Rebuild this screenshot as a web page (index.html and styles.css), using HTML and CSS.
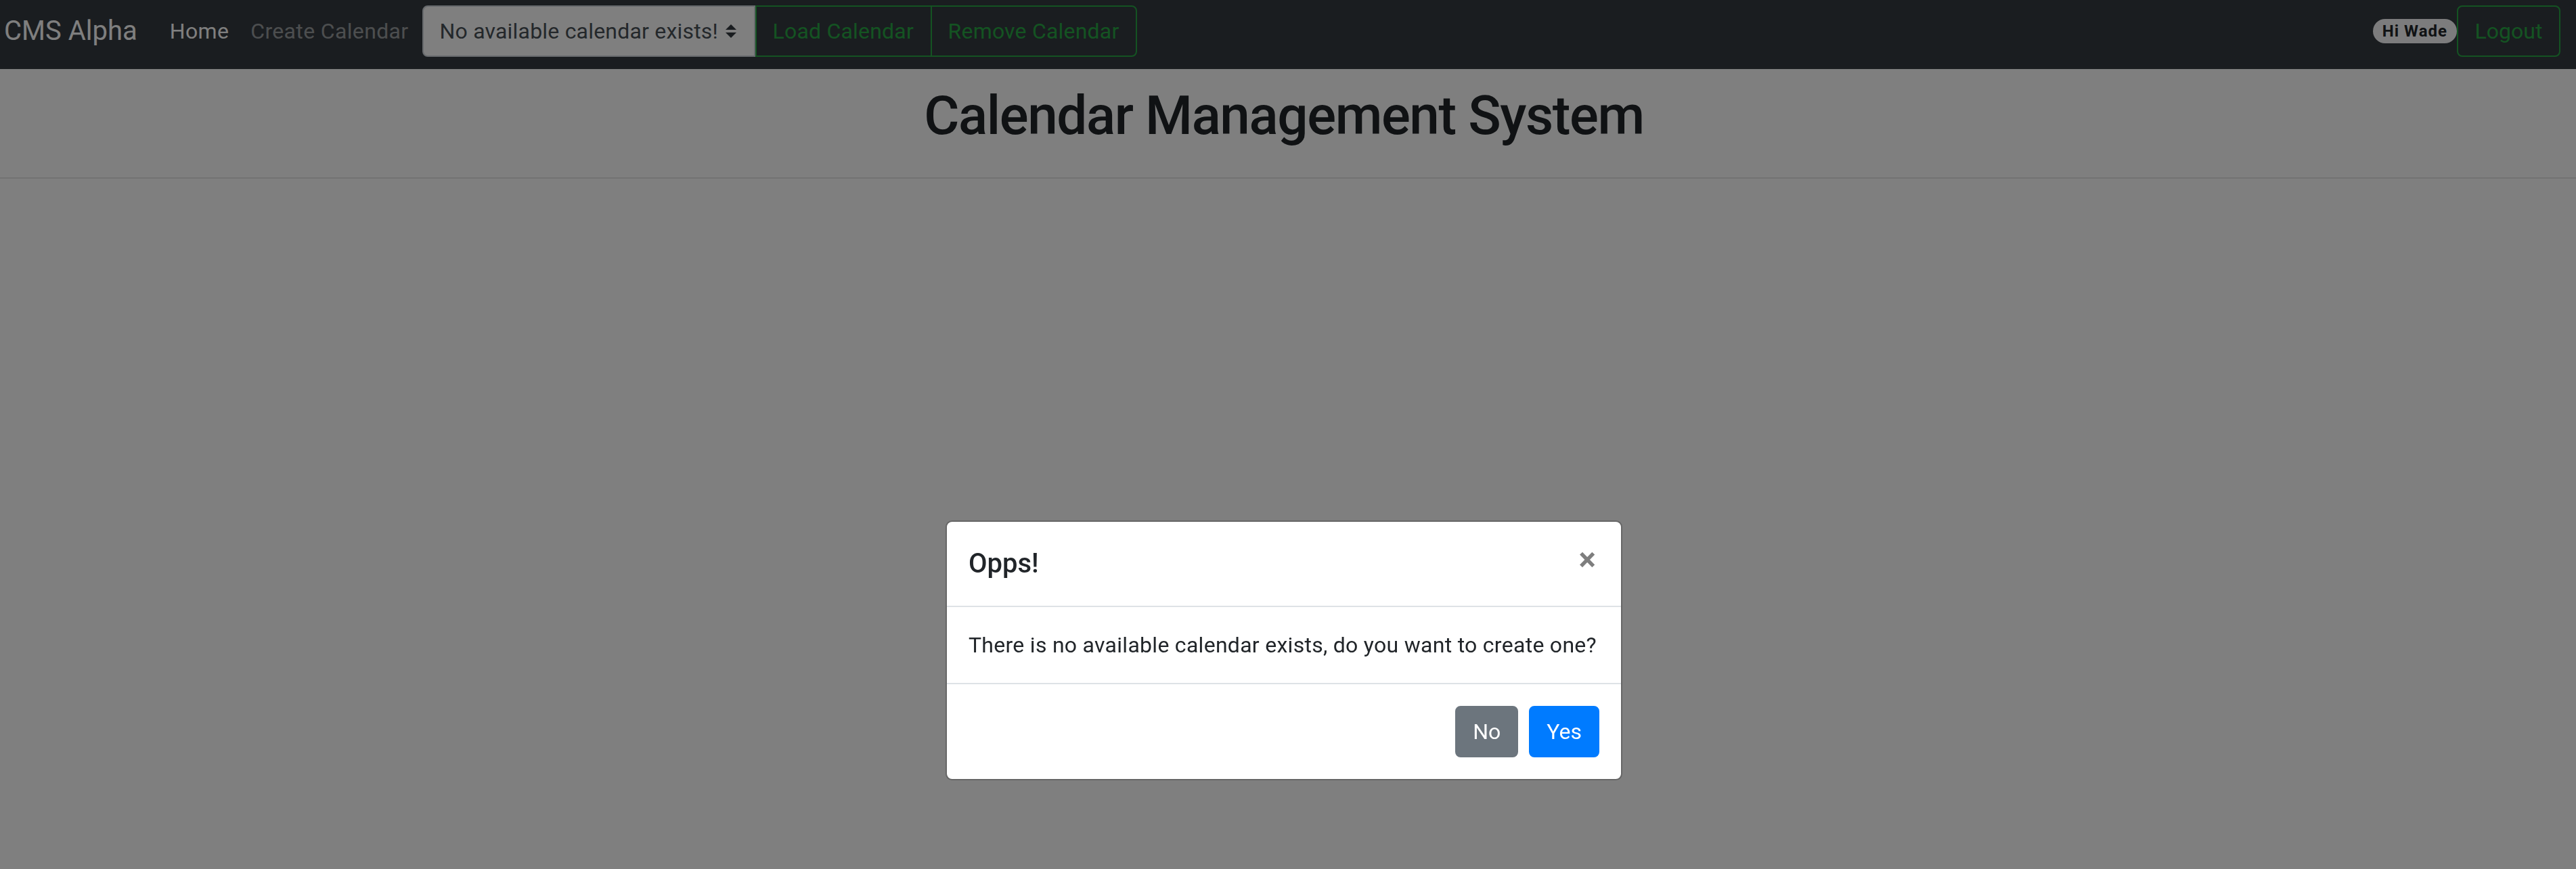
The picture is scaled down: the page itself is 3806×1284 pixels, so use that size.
FILE: index.html
```html
<!DOCTYPE html>
<html lang="en">
<head>
<meta charset="utf-8">
<title>CMS Alpha</title>
<link rel="stylesheet" href="styles.css">
</head>
<body>
<nav class="navbar">
  <a class="brand" href="#">CMS Alpha</a>
  <ul class="nav">
    <li><a class="nav-link active" href="#">Home</a></li>
    <li><a class="nav-link" href="#">Create Calendar</a></li>
  </ul>
  <form class="input-group">
    <div class="custom-select">
      <span class="select-text">No available calendar exists!</span>
      <svg class="select-arrow" viewBox="0 0 4 5" width="16" height="20"><path d="M2 0L0 2h4zm0 5L0 3h4z" fill="#343a40"/></svg>
    </div>
    <button type="button" class="btn btn-outline-success btn-mid">Load Calendar</button>
    <button type="button" class="btn btn-outline-success btn-last">Remove Calendar</button>
  </form>
  <div class="nav-right">
    <span class="badge">Hi Wade</span>
    <button type="button" class="btn btn-outline-success btn-logout">Logout</button>
  </div>
</nav>
<main class="content">
  <h1 class="title">Calendar Management System</h1>
  <hr class="rule">
</main>

<div class="backdrop"></div>
<div class="modal">
  <div class="modal-dialog">
    <div class="modal-header">
      <h5 class="modal-title">Opps!</h5>
      <button type="button" class="close">&times;</button>
    </div>
    <div class="modal-body">There is no available calendar exists, do you want to create one?</div>
    <div class="modal-footer">
      <button type="button" class="btn btn-secondary">No</button>
      <button type="button" class="btn btn-primary">Yes</button>
    </div>
  </div>
</div>
</body>
</html>
```

FILE: styles.css
```css
* { box-sizing: border-box; }
html, body { margin: 0; padding: 0; }
body {
  font-family: Roboto, Inter, "Liberation Sans", sans-serif;
  font-size: 32px;
  line-height: 1.5;
  color: #212529;
  background: #fff;
  height: 1284px;
  overflow: hidden;
}

.navbar {
  display: flex;
  align-items: center;
  height: 102px;
  padding: 8px 23px 18px 5px;
  background: #343a40;
}
.brand {
  font-size: 40px;
  line-height: 60px;
  color: #fff;
  text-decoration: none;
  margin-right: 32px;
  padding-left: 1px;
}
.nav {
  display: flex;
  list-style: none;
  margin: 0;
  padding: 0;
}
.nav-link {
  display: block;
  padding: 8px 16px;
  color: rgba(255,255,255,.5);
  text-decoration: none;
  line-height: 48px;
  letter-spacing: 0.35px;
}
.nav-link.active { color: #fff; }

.input-group {
  display: flex;
  margin: 0 0 0 4px;
}
.custom-select {
  display: flex;
  align-items: center;
  justify-content: space-between;
  width: 492px;
  height: 76px;
  padding: 0 26px 0 24px;
  background: #fff;
  border: 2px solid #ced4da;
  border-radius: 8px 0 0 8px;
  color: #495057;
  letter-spacing: 0.2px;
}
.select-arrow { display: block; }

.btn {
  font-family: inherit;
  font-size: 32px;
  line-height: 48px;
  padding: 12px 24px;
  border: 2px solid transparent;
  border-radius: 8px;
  background: transparent;
  cursor: pointer;
}
.btn-outline-success {
  color: #28a745;
  border-color: #28a745;
}
.btn-mid { border-radius: 0; width: 261px; padding: 12px 0 12px 24px; text-align: left; letter-spacing: 0.2px; }
.btn-last { border-radius: 0 8px 8px 0; margin-left: -2px; width: 305px; padding: 12px 0 12px 24px; text-align: left; letter-spacing: 0.2px; }

.nav-right {
  margin-left: auto;
  display: flex;
  align-items: center;
}
.badge {
  display: inline-block;
  font-size: 24px;
  font-weight: 700;
  line-height: 1;
  padding: 6px 14px;
  background: #f8f9fa;
  color: #212529;
  border-radius: 160px;
  letter-spacing: 1px;
}
.btn-logout { width: 153px; padding: 12px 0; }

.content { padding: 0 12px 0 0; }
.title {
  margin: 21px 0 0;
  font-size: 80px;
  font-weight: 500;
  line-height: 1.2;
  text-align: center;
  letter-spacing: -1.4px;
}
.rule {
  margin: 43px -12px 0 0;
  border: 0;
  border-top: 2px solid rgba(0,0,0,.1);
}

.backdrop {
  position: fixed;
  inset: 0;
  background: rgba(0,0,0,.5);
}
.modal {
  position: fixed;
  inset: 0;
  display: flex;
  justify-content: center;
  align-items: flex-start;
  padding: 769px 12px 0 0;
}
.modal-dialog {
  width: 1000px;
  background: #fff;
  border: 2px solid rgba(0,0,0,.2);
  border-radius: 9.6px;
  background-clip: padding-box;
}
.modal-header {
  display: flex;
  align-items: flex-start;
  justify-content: space-between;
  padding: 32px;
  border-bottom: 2px solid #dee2e6;
}
.modal-title {
  margin: 0;
  font-size: 40px;
  font-weight: 500;
  line-height: 60px;
}
.close {
  padding: 32px;
  margin: -32px -27px -32px auto;
  background: transparent;
  border: 0;
  font-family: inherit;
  font-size: 48px;
  font-weight: 700;
  line-height: 1;
  color: #000;
  opacity: .5;
  text-shadow: 0 2px 0 #fff;
}
.modal-body {
  padding: 32px;
  white-space: nowrap;
  letter-spacing: 0.28px;
}
.modal-footer {
  display: flex;
  justify-content: flex-end;
  align-items: center;
  padding: 24px;
  border-top: 2px solid #dee2e6;
}
.modal-footer .btn { margin: 8px; color: #fff; }
.btn-secondary { background: #6c757d; border-color: #6c757d; }
.btn-primary { background: #007bff; border-color: #007bff; }
```
